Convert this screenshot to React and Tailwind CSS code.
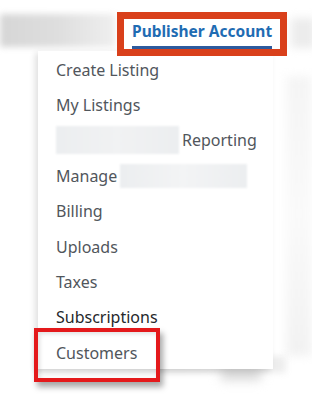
import React from "react";

const items = [
  { label: "Create Listing" },
  { label: "My Listings" },
  { label: "Reporting", blurBefore: true },
  { label: "Manage", blurAfter: true },
  { label: "Billing" },
  { label: "Uploads" },
  { label: "Taxes" },
  { label: "Subscriptions", dark: true },
  { label: "Customers" },
];

export default function App() {
  return (
    <div
      className="relative w-[312px] h-[418px] overflow-hidden bg-white"
      style={{ fontFamily: '"Noto Sans", "Open Sans", sans-serif' }}
    >
      {/* Blurred page behind the dropdown */}
      <div className="flex items-start pt-[12px]">
        <div className="mt-[2px] h-[33px] w-[115px] shrink-0 bg-gradient-to-r from-[#d6d6d6] via-[#dedede] to-[#efefef] blur-[3px]" />
        <div className="relative z-20 ml-[2px] shrink-0 border-[7px] border-[#d9401b] bg-white">
          <div className="px-2">
            <span className="block whitespace-nowrap border-b-[3px] border-[#2d5b9e] pb-[3px] text-[15.5px] font-bold leading-[24px] text-[#1f6cb3]">
              Publisher Account
            </span>
          </div>
        </div>
        <div className="ml-[4px] mt-[6px] h-[30px] w-[24px] shrink-0 bg-[#ececec] blur-[4px]" />
      </div>

      <div className="flex justify-end pt-[20px]">
        <div className="h-[280px] w-[26px] bg-gradient-to-b from-[#f5f5f5] via-[#fafafa] to-[#f2f2f2] blur-[5px]" />
      </div>
      <div className="ml-[36px] flex h-[17px] w-[250px] items-center bg-gradient-to-r from-[#ececec] via-[#e6e6e6] to-[#eeeeee] blur-[3px]">
        <div className="ml-[185px] h-[30px] w-[40px] bg-[#d8d8d8] blur-[4px]" />
      </div>

      {/* Dropdown menu */}
      <div className="absolute left-[38px] top-[51px] z-10 h-[318px] w-[235px] bg-white pt-[1px] shadow-[-3px_2px_6px_rgba(0,0,0,0.12)]">
        {items.map((it) => (
          <div
            key={it.label}
            className={`flex h-[35.4px] items-center pl-[18px] text-[16px] ${it.dark ? "text-[#25282b]" : "text-[#51565c]"}`}
          >
            {it.blurBefore && (
              <div className="mr-[3px] h-[28px] w-[123px] bg-gradient-to-r from-[#eceef0] via-[#f1f2f3] to-[#eceef0] blur-[1px]" />
            )}
            <span>{it.label}</span>
            {it.blurAfter && (
              <div className="ml-[3px] h-[24px] w-[127px] bg-gradient-to-r from-[#eceef0] via-[#f3f4f5] to-[#eceef0] blur-[1px]" />
            )}
          </div>
        ))}
      </div>

      {/* Annotation box */}
      <div className="absolute left-[34px] top-[328px] z-30 h-[54px] w-[126px] border-4 border-[#e4191b] shadow-[3px_5px_6px_rgba(0,0,0,0.35),inset_2px_2px_4px_rgba(0,0,0,0.12)]" />
    </div>
  );
}
